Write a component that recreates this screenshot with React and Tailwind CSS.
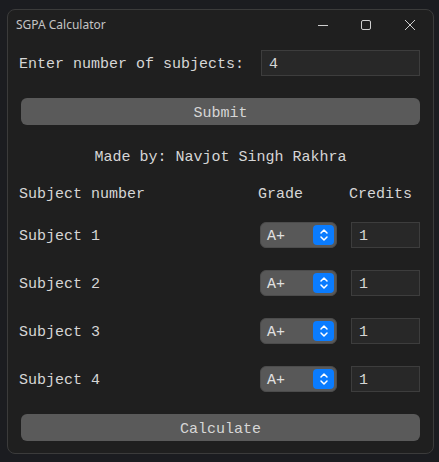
import * as React from "react"

const mono = { fontFamily: '"Liberation Mono", "Courier New", monospace' }

function GradeSelect() {
  return (
    <div className="flex h-[26px] w-[77px] items-center justify-between rounded-[6px] border border-[#4c4c4c] bg-[#585858] pl-[6px] pr-[2px]">
      <span className="pt-[5px] text-[15px] text-[#e0e0e0]">A+</span>
      <div className="flex h-[20px] w-[21px] items-center justify-center rounded-[4px] bg-[#0a7cff]">
        <svg width="10" height="14" viewBox="0 0 10 14" fill="none" stroke="white" strokeWidth="1.5" strokeLinecap="round" strokeLinejoin="round">
          <path d="M2 5 L5 2 L8 5" />
          <path d="M2 9 L5 12 L8 9" />
        </svg>
      </div>
    </div>
  )
}

function SubjectRow({ n }) {
  return (
    <div className="flex h-[26px] items-center pl-[11px]">
      <span className="w-[241px] pt-[5px] text-[15px]">Subject {n}</span>
      <GradeSelect />
      <div className="ml-[14px] flex h-[26px] w-[69px] items-center border border-[#3d3d3d] bg-[#282828] pl-[7px] pt-[5px] text-[15px]">
        1
      </div>
    </div>
  )
}

export default function App() {
  return (
    <div className="h-[462px] w-[439px] bg-[#1b1c20] pl-[7px] pt-[9px]">
      <div className="h-[445px] w-[427px] rounded-[8px] border border-[#3b3b3b] bg-[#1f1f1f] text-[#d6d6d6]">
        <div className="flex h-[30px] items-center justify-between pl-[8px]">
          <span className="text-[12px] text-[#c4c4c4]" style={{ fontFamily: '"Noto Sans", "Open Sans", sans-serif' }}>
            SGPA Calculator
          </span>
          <div className="flex items-center">
            <div className="flex w-[44px] justify-center">
              <svg width="12" height="12" viewBox="0 0 12 12" stroke="#cfcfcf" strokeWidth="1"><path d="M1 6.5 H11" /></svg>
            </div>
            <div className="flex w-[42px] justify-center">
              <svg width="12" height="12" viewBox="0 0 12 12" fill="none" stroke="#cfcfcf" strokeWidth="1"><rect x="1.5" y="1.5" width="9" height="9" rx="1.5" /></svg>
            </div>
            <div className="flex w-[46px] justify-center">
              <svg width="12" height="12" viewBox="0 0 12 12" stroke="#cfcfcf" strokeWidth="1"><path d="M1 1 L11 11 M11 1 L1 11" /></svg>
            </div>
          </div>
        </div>

        <div style={mono}>
          <div className="mt-[10px] flex h-[26px] items-center pl-[11px] pr-[13px]">
            <span className="pt-[5px] text-[15px]">Enter number of subjects:</span>
            <div className="ml-auto flex h-[26px] w-[159px] items-center border border-[#3d3d3d] bg-[#282828] pl-[7px] pt-[5px] text-[15px]">
              4
            </div>
          </div>

          <div className="mx-[13px] mt-[22px] flex h-[27px] items-center justify-center rounded-[6px] bg-[#5a5a5a] pt-[5px] text-[15px]">
            Submit
          </div>

          <div className="mt-[20px] flex h-[22px] items-center justify-center pt-[5px] text-[15px]">
            Made by: Navjot Singh Rakhra
          </div>

          <div className="mt-[15px] flex h-[22px] items-center pl-[11px] pt-[5px] text-[15px]">
            <span className="w-[239px]">Subject number</span>
            <span className="w-[91px]">Grade</span>
            <span>Credits</span>
          </div>

          <div className="mt-[18px] flex flex-col gap-[22px]">
            {[1, 2, 3, 4].map((n) => (
              <SubjectRow key={n} n={n} />
            ))}
          </div>

          <div className="mx-[13px] mt-[22px] flex h-[27px] items-center justify-center rounded-[6px] bg-[#5a5a5a] pt-[5px] text-[15px]">
            Calculate
          </div>
        </div>
      </div>
    </div>
  )
}
